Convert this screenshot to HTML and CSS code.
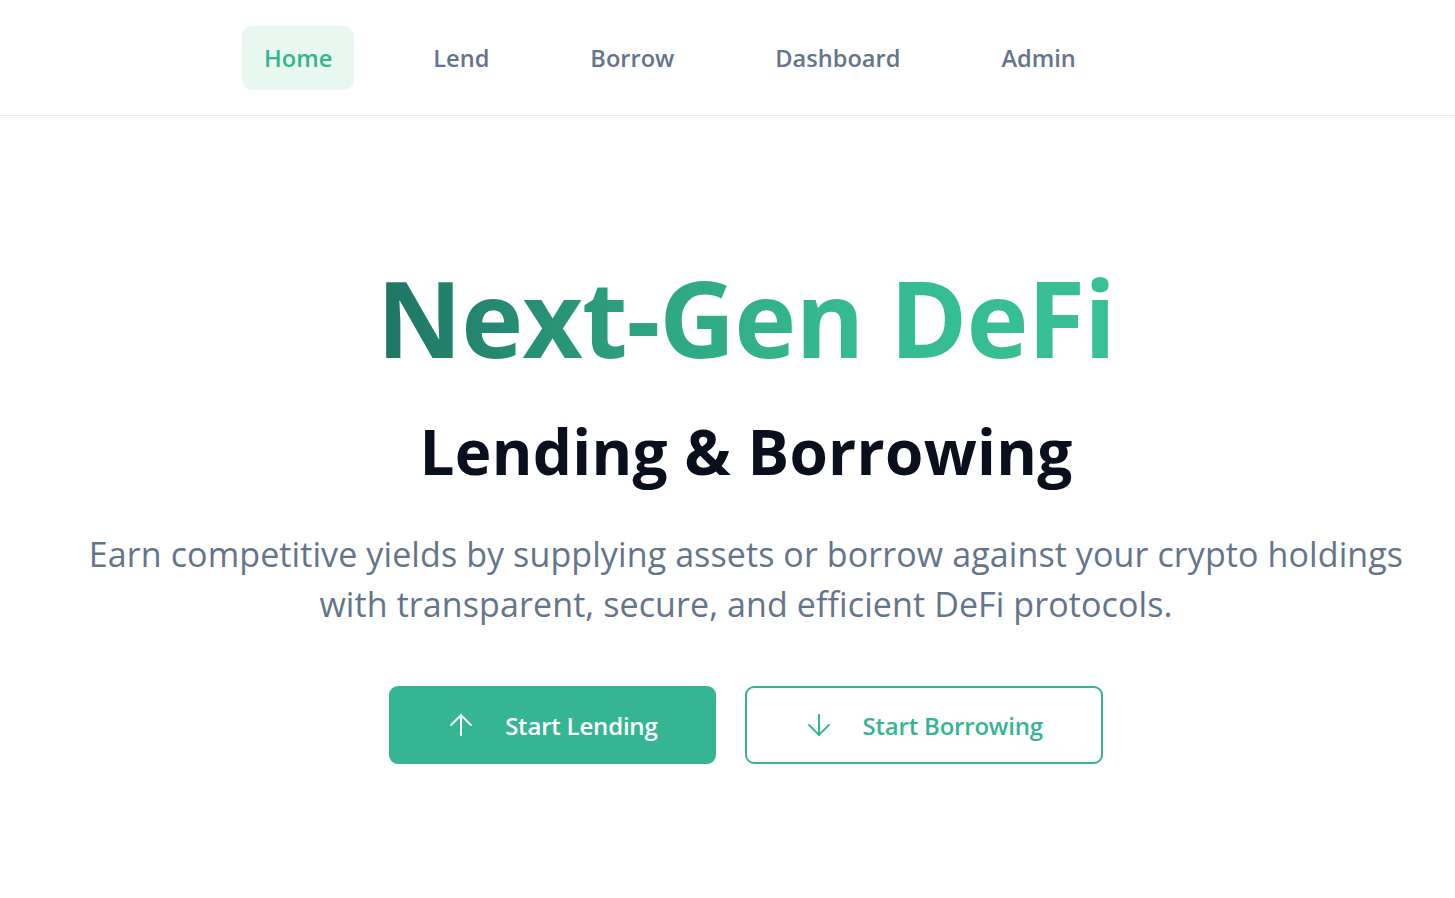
FILE: index.html
```html
<!DOCTYPE html>
<html lang="en">
<head>
<meta charset="utf-8">
<title>Next-Gen DeFi</title>
<link rel="stylesheet" href="styles.css">
</head>
<body>
<header class="topbar">
  <nav class="nav">
    <a class="nav-item active" href="#">Home</a>
    <a class="nav-item" href="#">Lend</a>
    <a class="nav-item" href="#">Borrow</a>
    <a class="nav-item" href="#">Dashboard</a>
    <a class="nav-item" href="#">Admin</a>
  </nav>
</header>
<main class="hero">
  <h1 class="title">Next-Gen DeFi</h1>
  <h2 class="subtitle">Lending &amp; Borrowing</h2>
  <p class="lead">Earn competitive yields by supplying assets or borrow against your crypto holdings<br>with transparent, secure, and efficient DeFi protocols.</p>
  <div class="actions">
    <a class="btn btn-primary" href="#">
      <svg class="icon" viewBox="0 0 24 24" fill="none" stroke="currentColor" stroke-width="1.4" stroke-linecap="round" stroke-linejoin="round"><path d="M12 19V5"/><path d="M5 12l7-7 7 7"/></svg>
      <span>Start Lending</span>
    </a>
    <a class="btn btn-outline" href="#">
      <svg class="icon" viewBox="0 0 24 24" fill="none" stroke="currentColor" stroke-width="1.4" stroke-linecap="round" stroke-linejoin="round"><path d="M12 5v14"/><path d="M19 12l-7 7-7-7"/></svg>
      <span>Start Borrowing</span>
    </a>
  </div>
</main>
</body>
</html>
```
FILE: styles.css
```css
* { box-sizing: border-box; }
html, body { margin: 0; padding: 0; background: #ffffff; }
body { font-family: "Open Sans", "Noto Sans", sans-serif; color: #0b1120; }

.topbar {
  height: 116px;
  border-bottom: 1px solid #e6e9ee;
  display: flex;
  align-items: center;
}
.nav {
  display: flex;
  align-items: center;
  gap: 57px;
  padding-left: 242px;
}
.nav-item {
  height: 64px;
  padding: 0 22px;
  border-radius: 10px;
  display: flex;
  align-items: center;
  font-size: 23.6px;
  font-weight: 600;
  color: #64748b;
  text-decoration: none;
}
.nav-item.active {
  background: #e8f8f1;
  color: #34b58f;
}

.hero {
  display: flex;
  flex-direction: column;
  align-items: center;
  padding-left: 37px;
  padding-top: 149px;
  text-align: center;
}
.title {
  margin: 0;
  font-size: 105px;
  line-height: 1;
  font-weight: 700;
  letter-spacing: -1px;
  background: linear-gradient(90deg, #1e7566 0%, #2fa884 40%, #36bb92 65%, #38c096 100%);
  -webkit-background-clip: text;
  background-clip: text;
  color: transparent;
}
.subtitle {
  margin: 44px 0 0;
  font-size: 62px;
  line-height: 1.2;
  font-weight: 700;
  color: #0a0f1d;
  letter-spacing: 0.3px;
}
.lead {
  margin: 41px 0 0;
  font-size: 34px;
  line-height: 50px;
  color: #64748b;
  letter-spacing: 0.1px;
}
.actions {
  margin-top: 57px;
  display: flex;
  gap: 29px;
}
.btn {
  height: 78px;
  display: flex;
  align-items: center;
  gap: 27px;
  padding: 0 58px 0 55px;
  border-radius: 9px;
  font-size: 24px;
  font-weight: 600;
  text-decoration: none;
  letter-spacing: -0.2px;
}
.btn-primary {
  background: #36b594;
  color: #ffffff;
}
.btn-outline {
  background: #ffffff;
  color: #36b594;
  border: 2px solid #36b594;
}
.icon { width: 34px; height: 34px; flex: none; }
```
